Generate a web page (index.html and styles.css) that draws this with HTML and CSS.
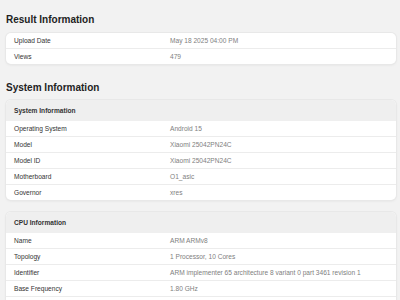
FILE: index.html
```html
<!DOCTYPE html>
<html lang="en">
<head>
    <meta charset="UTF-8">
    <title>Geekbench Result</title>
    <link rel="stylesheet" href="styles.css">
</head>
<body>
    <h2 class="section-title first">Result Information</h2>
    <div class="card">
        <div class="row"><span class="label">Upload Date</span><span class="value">May 18 2025 04:00 PM</span></div>
        <div class="row"><span class="label">Views</span><span class="value">479</span></div>
    </div>

    <h2 class="section-title">System Information</h2>
    <div class="card">
        <div class="card-head">System Information</div>
        <div class="row"><span class="label">Operating System</span><span class="value">Android 15</span></div>
        <div class="row"><span class="label">Model</span><span class="value">Xiaomi 25042PN24C</span></div>
        <div class="row"><span class="label">Model ID</span><span class="value">Xiaomi 25042PN24C</span></div>
        <div class="row"><span class="label">Motherboard</span><span class="value">O1_asic</span></div>
        <div class="row"><span class="label">Governor</span><span class="value">xres</span></div>
    </div>

    <div class="card spaced">
        <div class="card-head">CPU Information</div>
        <div class="row"><span class="label">Name</span><span class="value">ARM ARMv8</span></div>
        <div class="row"><span class="label">Topology</span><span class="value">1 Processor, 10 Cores</span></div>
        <div class="row"><span class="label">Identifier</span><span class="value">ARM implementer 65 architecture 8 variant 0 part 3461 revision 1</span></div>
        <div class="row"><span class="label">Base Frequency</span><span class="value">1.80 GHz</span></div>
        <div class="row"></div>
    </div>
</body>
</html>
```

FILE: styles.css
```css
body {
    margin: 0;
    padding: 0 4px 0 6px;
    background-color: #f2f2f2;
    font-family: "Liberation Sans", Arial, sans-serif;
    color: #333;
    overflow: hidden;
}

.section-title {
    margin: 17px 0 5px;
    font-size: 10px;
    line-height: 14px;
    font-weight: bold;
    color: #222;
}

.section-title.first {
    margin-top: 13px;
    margin-bottom: 6px;
}

.card {
    background-color: #fff;
    border-radius: 5px;
    box-shadow: 0 0 0 1px #e8e8e8, 0 1px 3px rgba(0, 0, 0, 0.08);
    overflow: hidden;
}

.card.spaced {
    margin-top: 12px;
}

.card-head {
    height: 21px;
    line-height: 21px;
    padding-left: 8px;
    background-color: #efefef;
    font-size: 6.6px;
    font-weight: bold;
    color: #333;
}

.row {
    display: grid;
    grid-template-columns: 156px 1fr;
    height: 15px;
    line-height: 15px;
    padding-left: 8px;
    border-top: 1px solid #ececec;
    font-size: 6.6px;
}

.card > .row:first-child {
    border-top: none;
}

.card-head + .row {
    border-top: none;
}

.label {
    color: #333;
}

.value {
    color: #808080;
}
```
